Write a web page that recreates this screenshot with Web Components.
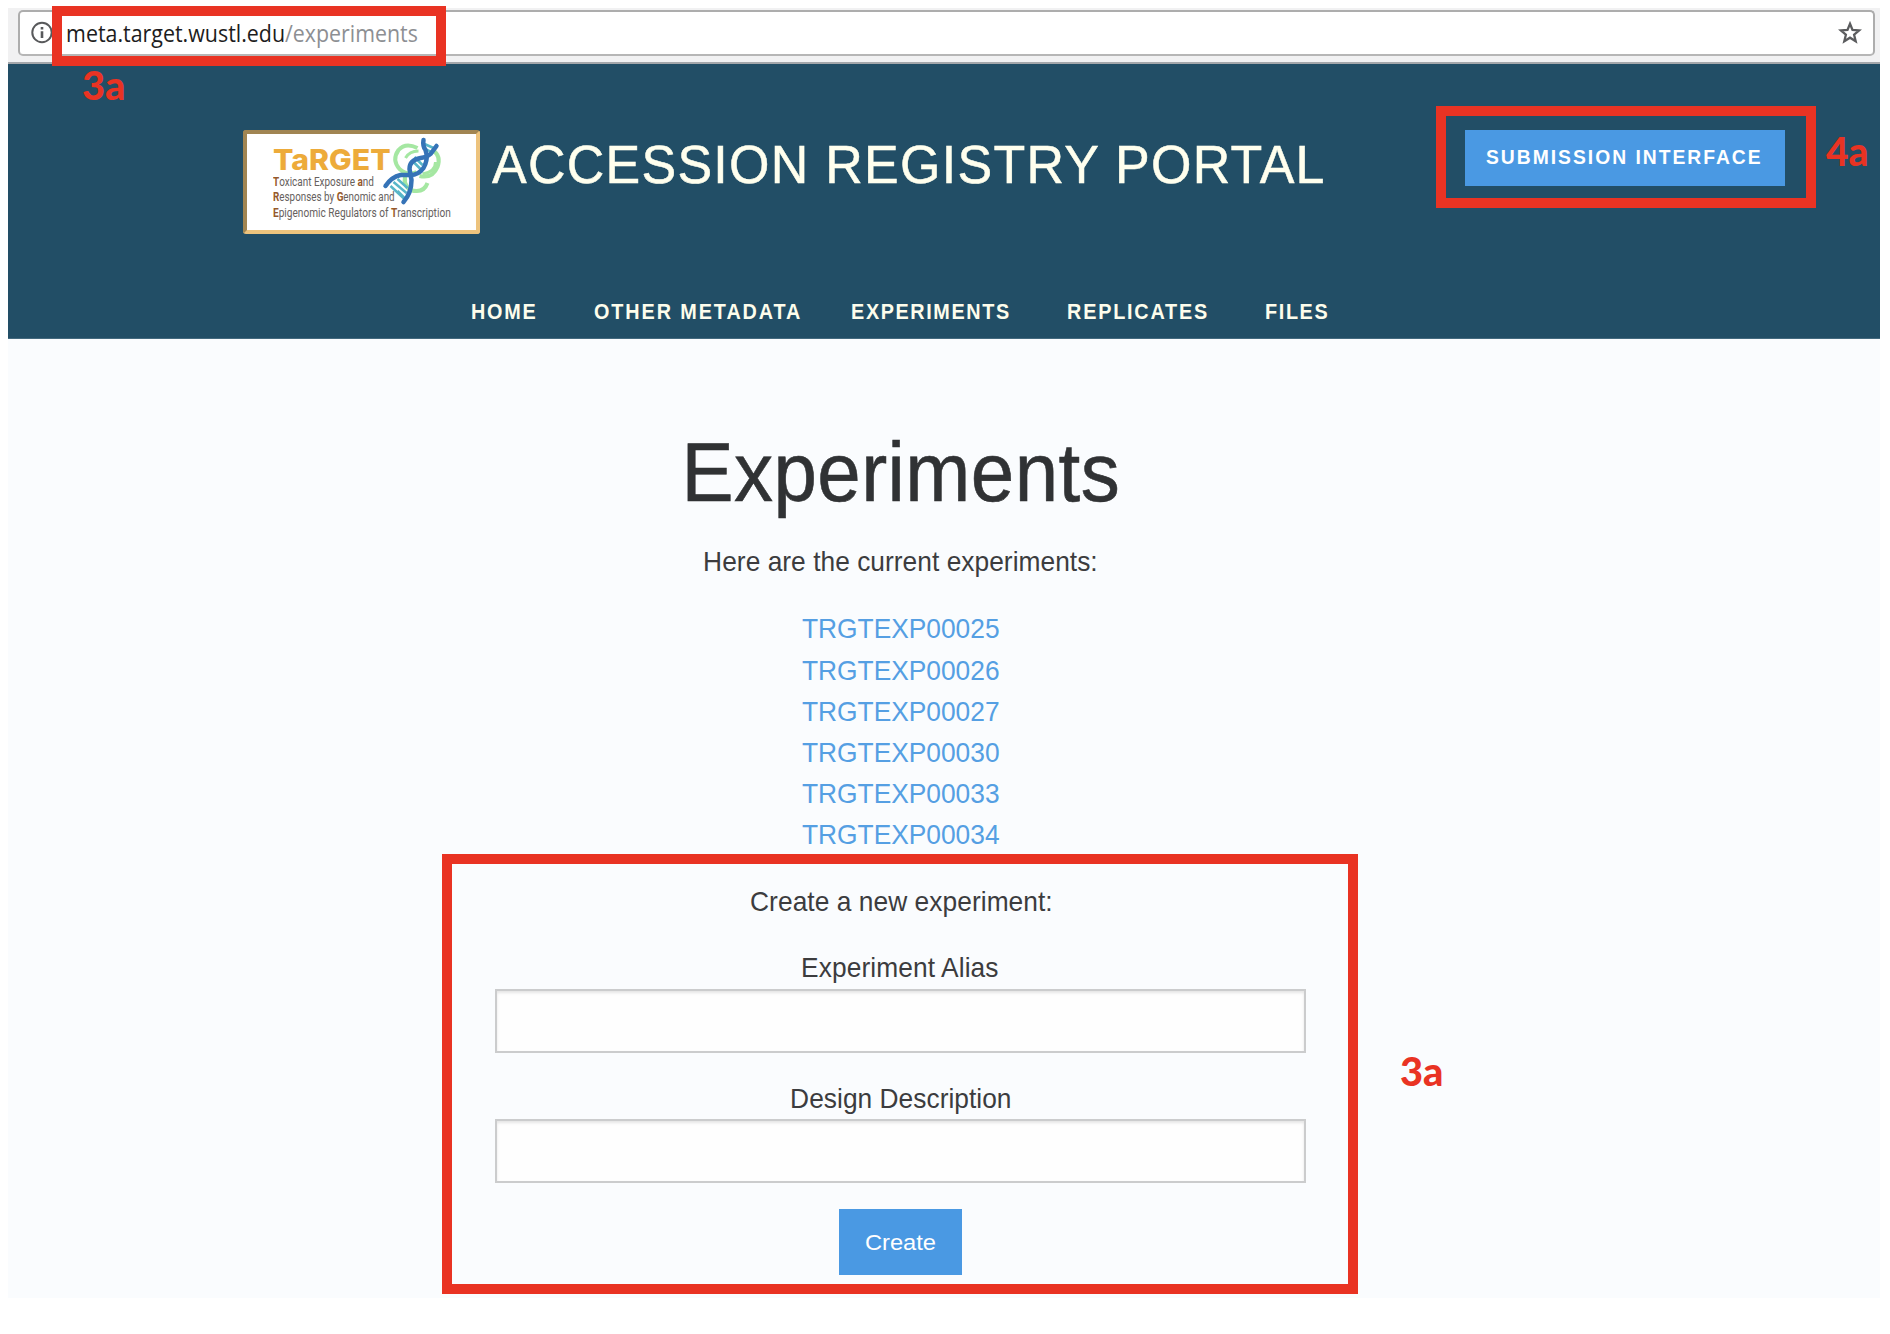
<!DOCTYPE html>
<html lang="en">
<head>
<meta charset="utf-8">
<title>Accession Registry Portal</title>
<style>
html,body{margin:0;background:#fff}
body{width:1890px;height:1334px;overflow:hidden;font-family:"Liberation Sans",Arial,sans-serif}
</style>
</head>
<body>
<portal-page></portal-page>
<script>
/* Single text run, its box is the cap box; w = drawn width, sx = glyph width factor */
class FitText extends HTMLElement{
  connectedCallback(){
    const w=+this.getAttribute('w');
    const root=this.attachShadow({mode:'open'});
    root.innerHTML='<style>:host{display:block;height:.7em;line-height:.7em;white-space:nowrap;flex:none}span{display:inline-block;transform-origin:0 0}</style><span><slot></slot></span>';
    this.style.width=w+'px';
    const span=root.querySelector('span'),cs=getComputedStyle(this);
    let ink=span.offsetWidth,lb=0;
    if(!this.children.length){
      const c=document.createElement('canvas').getContext('2d');
      c.font=cs.fontWeight+' '+cs.fontSize+' '+cs.fontFamily;
      const m=c.measureText(this.textContent);
      ink=m.actualBoundingBoxRight+m.actualBoundingBoxLeft;
      lb=-m.actualBoundingBoxLeft;
    }
    let sx=w/ink;
    if(this.hasAttribute('sx')){
      sx=+this.getAttribute('sx');
      span.style.letterSpacing=((w/sx-ink)/(this.textContent.length-1))+'px';
    }
    span.style.transform='translateX('+(-lb*sx)+'px) scaleX('+sx+')';
  }
}
customElements.define('fit-text',FitText);

const define=(name,html)=>customElements.define(name,class extends HTMLElement{
  connectedCallback(){
    const t=document.createElement('template');
    t.innerHTML=html;
    this.attachShadow({mode:'open'}).appendChild(t.content.cloneNode(true));
  }
});

define('address-bar',`<style>
:host{display:flex;box-sizing:border-box;height:56px;padding:2px 5px 6.5px 10px;background:#f1f1f2;border-bottom:2px solid #a4a7ab}
.box{flex:1;display:flex;align-items:center;box-sizing:border-box;height:46px;background:#fff;border:2px solid #adadad;border-bottom-color:#b6b6b6;border-radius:5px;padding:0 11px 0 11px}
fit-text{font:23px "Open Sans","Noto Sans",sans-serif;line-height:.7em;color:#1c1c20}
.path{color:#8d8f93;margin-left:1px}.host{margin-left:14px}
.star{margin-left:auto}
svg{display:block;flex:none}
</style>
<div class="box">
<svg width="22" height="24" viewBox="0 0 22 24"><circle cx="11" cy="11.5" r="9.7" fill="none" stroke="#58595b" stroke-width="2"/><path d="M11 10.2v6.8M11 6v2.6" stroke="#58595b" stroke-width="2.6"/></svg>
<fit-text class="host" w="217">meta.target.wustl.edu</fit-text><fit-text class="path" w="132">/experiments</fit-text>
<svg class="star" width="24" height="24" viewBox="0 0 24 24"><path d="M12 2.8l2.5 6.1 6.7.5-5.1 4.3 1.6 6.5L12 16.7l-5.7 3.5 1.6-6.5-5.1-4.3 6.7-.5z" fill="none" stroke="#5b5c5e" stroke-width="2.3"/></svg>
</div>`);

define('target-logo',`<style>
:host{display:block;box-sizing:border-box;width:237px;height:104px;background:#fff;border:4.5px solid;border-color:#a18552 #edc37d #edc37d #a18552;border-radius:3px;overflow:hidden}
.row{display:grid}
.text,svg{grid-area:1/1}
.text{padding:16px 0 0 26px}
.name{font:800 29px Inter,sans-serif;line-height:.7em;color:#edab3a}
.l{font:13px Roboto,sans-serif;line-height:.7em;color:#66615e;margin-top:6.400px}
b{color:#96592a}
</style>
<div class="row"><div class="text">
<fit-text class="name" w="117">TaRGET</fit-text>
<fit-text class="l" w="101"><b>T</b>oxicant Exposure <b>a</b>nd</fit-text>
<fit-text class="l" w="122"><b>R</b>esponses by <b>G</b>enomic and</fit-text>
<fit-text class="l" w="178"><b>E</b>pigenomic Regulators of <b>T</b>ranscription</fit-text>
</div>
<svg width="228" height="94" viewBox="248.500 134 228 94" fill="none">
<g stroke="#a5e7a2" stroke-width="4"><path d="M419 148q-12-6-19 2q-7 10 1 19q8 7 17 3"/><path d="M434 150q9 6 5 17q-5 12-18 9"/><path d="M408 173q-5 11 4 17q13 4 17-7"/><path d="M407 158q4-7 13-7M424 174q13-2 13-12" stroke-width="3"/></g>
<g stroke="#58b6c8" stroke-width="2.500"><path d="M392 186l14 13M395 182l13 11M399 179l10 9M415 162l8 8M416 157l8 8M426 144l9 4M427 149l6 3M399 191l8 8"/></g>
<g stroke="#3573b7" stroke-width="4.500" stroke-linecap="round"><path d="M387 186q6-9 15-11h10q8 0 13-7q4-7 3-14l-1-4q-3-4-2-10"/><path d="M438 146l-6 8q-3 3-10 4q-11 2-11 11l2 11q0 13-8 22"/></g>
</svg></div>`);

define('site-nav',`<style>
:host{display:flex;padding-left:464px;font-size:22px;font-weight:700;color:#fdfdec}
a{display:block}
</style>
<a><fit-text w="63" sx=".9">HOME</fit-text></a>
<a style="margin-left:58.500px"><fit-text w="206.500" sx=".9">OTHER METADATA</fit-text></a>
<a style="margin-left:51.500px"><fit-text w="156.500" sx=".9">EXPERIMENTS</fit-text></a>
<a style="margin-left:60px"><fit-text w="138.500" sx=".9">REPLICATES</fit-text></a>
<a style="margin-left:59.500px"><fit-text w="61" sx=".9">FILES</fit-text></a>`);

define('site-header',`<style>
:host{display:block;box-sizing:border-box;height:275px;padding-top:66px;background:#224e66;border-bottom:1px solid #43697e}
.top{display:flex;align-items:flex-start;padding:0 95px 0 235px}
h1{margin:16px 0 0 12px;font-size:53px;font-weight:400;color:#ffffee;-webkit-text-stroke:.5px #ffffee}
button{display:flex;align-items:flex-start;margin:0 0 0 auto;border:0;padding:19.500px 0 0 21px;width:320px;height:55.500px;background:#4a99e3;font:700 20.500px "Liberation Sans",sans-serif;color:#fff}
site-nav{margin-top:70px}
</style>
<div class="top"><target-logo></target-logo><h1><fit-text w="832" sx=".98">ACCESSION REGISTRY PORTAL</fit-text></h1>
<button><fit-text w="274" sx=".94">SUBMISSION INTERFACE</fit-text></button></div>
<site-nav></site-nav>`);

define('experiment-list',`<style>
:host{display:flex;flex-direction:column;align-items:center;gap:21.550px;color:#559fe3}
</style>`+['25','26','27','30','33','34'].map(n=>`<a><fit-text w="197" sx=".94">TRGTEXP000${n}</fit-text></a>`).join(''));

define('labelled-input',`<style>
:host{display:flex;flex-direction:column;align-items:center}
input{display:block;box-sizing:border-box;width:811px;height:64px;margin:10.800px 0 0;border:2px solid #cbcccd;background:#fefefe;box-shadow:inset 0 2px 3px rgba(10,10,10,.1);border-radius:0;outline:0}
</style><slot></slot><input type="text">`);

define('experiment-form',`<style>
:host{display:flex;flex-direction:column;align-items:center}
labelled-input{margin-top:47.200px}
labelled-input+labelled-input{margin-top:36px}
button{display:flex;justify-content:center;align-items:flex-start;width:123px;height:66px;margin-top:26px;padding:26px 1px 0 0;border:0;background:#4a99e3;color:#fff;font:22.500px "Liberation Sans",sans-serif}
</style>
<fit-text w="300" sx=".94">Create a new experiment:</fit-text>
<labelled-input><fit-text w="196" sx=".94">Experiment Alias</fit-text></labelled-input>
<labelled-input><fit-text w="218" sx=".94">Design Description</fit-text></labelled-input>
<button><fit-text w="69.500">Create</fit-text></button>`);

define('experiments-view',`<style>
:host{display:flex;flex-direction:column;align-items:center;box-sizing:border-box;height:959px;padding:104px 87px 0 0;background:#fafcfe;color:#3c3c3e;font-size:28px}
h2{margin:0 0 0 2px;font-size:84px;font-weight:400;color:#303234;-webkit-text-stroke:.6px #303234}
.intro{margin-top:50px}
experiment-list{margin-top:48px}
experiment-form{margin-top:47px}
</style>
<h2><fit-text w="430" sx=".93">Experiments</fit-text></h2>
<fit-text class="intro" w="391" sx=".94">Here are the current experiments:</fit-text>
<experiment-list></experiment-list>
<experiment-form></experiment-form>`);

define('call-out',`<style>
:host{position:absolute;box-sizing:border-box;border:10px solid #e93323;pointer-events:none}
</style>`);
define('call-label',`<style>
:host{position:absolute;color:#e93323;font:900 40px Lato,sans-serif}
</style><slot></slot>`);

define('portal-page',`<style>
:host{display:block;position:relative;height:1334px;box-sizing:border-box;padding:8px 10px 0 8px}
</style>
<address-bar></address-bar><site-header></site-header><experiments-view></experiments-view>
<call-out style="left:52px;top:6px;width:394px;height:60px"></call-out>
<call-out style="left:1436px;top:106px;width:380px;height:102px"></call-out>
<call-out style="left:442px;top:854px;width:916px;height:440px"></call-out>
<call-label style="left:82.500px;top:71px"><fit-text w="41">3a</fit-text></call-label>
<call-label style="left:1826px;top:137px"><fit-text w="41">4a</fit-text></call-label>
<call-label style="left:1400.500px;top:1057px"><fit-text w="41">3a</fit-text></call-label>`);
</script>
</body>
</html>
